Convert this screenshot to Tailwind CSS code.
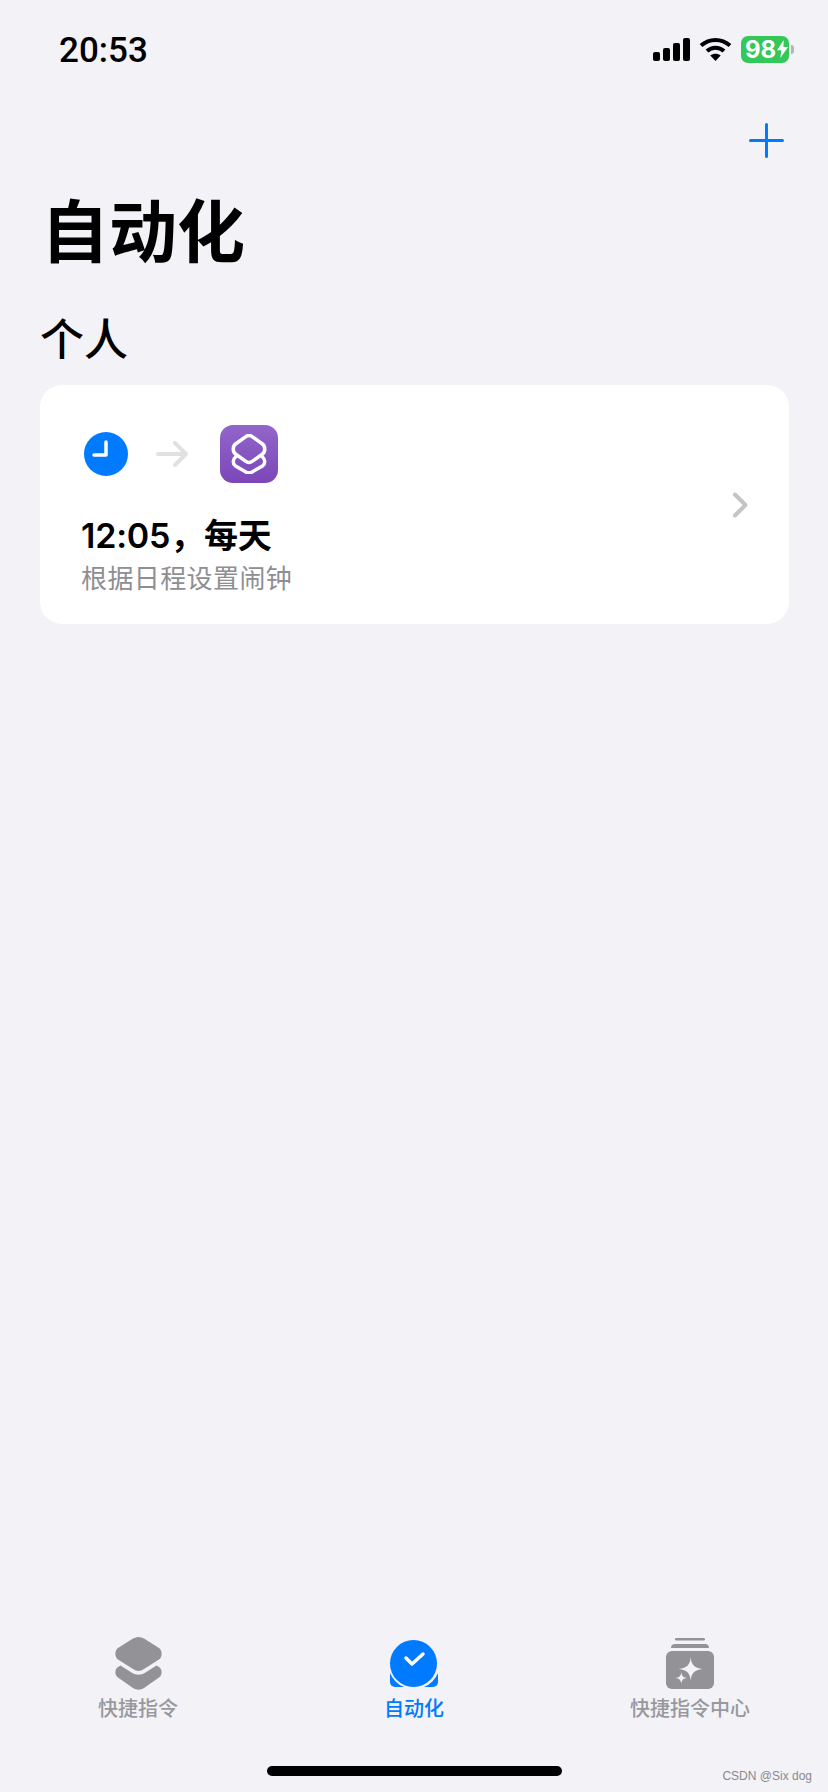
<!DOCTYPE html>
<html lang="zh-CN">
<head>
  <meta charset="UTF-8"/>
  <title>自动化</title>
  <script src="https://cdn.jsdelivr.net/npm/@tailwindcss/browser@4"></script>
</head>
<body class="bg-[#f2f2f7] font-['Inter','Noto_Sans_CJK_SC',sans-serif] text-black">
  <div class="relative w-[828px] h-[1792px] flex flex-col overflow-hidden">

    <!-- status bar -->
    <div class="h-[100px] pl-[59px] pr-[34px] pt-[29px] flex justify-between items-start">
      <span class="font-['Roboto',sans-serif] text-[35px] leading-[44px] font-medium">20:53</span>
      <div class="flex items-center gap-[9px] h-[44px] -mt-[2px]">
        <svg width="37" height="23" viewBox="0 0 37 23" fill="#000">
          <rect x="0" y="14" width="7" height="9" rx="2"/>
          <rect x="10" y="10" width="7" height="13" rx="2"/>
          <rect x="20" y="5" width="7" height="18" rx="2"/>
          <rect x="30" y="0" width="7" height="23" rx="2"/>
        </svg>
        <svg width="33" height="24" viewBox="0 0 33 24" fill="none" stroke="#000" stroke-width="4">
          <path d="M2 8.500C10.500 1 22.500 1 31 8.500"/>
          <path d="M8 14C13 9.500 20 9.500 25 14"/>
          <path d="M16.500 24L11.300 18.600C14.300 16 18.700 16 21.700 18.600Z" fill="#000" stroke="none"/>
        </svg>
        <div class="flex items-center gap-[2px]">
          <div class="w-[48px] h-[27px] rounded-[7px] bg-[#34c759] text-white text-[24px] leading-[27px] font-bold flex items-center pl-[4px] gap-[1px]">
            <span>98</span>
            <svg width="11" height="20" viewBox="0 0 13 21" fill="#fff"><path d="M8 0L0 12H5L4 21L13 8H7.500Z"/></svg>
          </div>
          <div class="w-[3px] h-[9px] rounded-r-full bg-[#b5b5b8]"></div>
        </div>
      </div>
    </div>

    <!-- add button -->
    <div class="h-[60px] pr-[44px] flex justify-end items-start pt-[23px]">
      <svg width="35" height="35" viewBox="0 0 35 35" stroke="#007aff" stroke-width="3" stroke-linecap="round">
        <path d="M17.500 1.500V33.500M1.500 17.500H33.500"/>
      </svg>
    </div>

    <h1 class="pl-[41px] mt-[32px] text-[68px] leading-[80px] font-bold">自动化</h1>
    <h2 class="pl-[40px] mt-[40px] text-[44px] leading-[56px] font-medium">个人</h2>

    <!-- automation card -->
    <div class="mt-[17px] ml-[40px] w-[749px] h-[239px] rounded-[22px] bg-white pl-[41px] pr-[41px] flex items-center justify-between">
      <div class="self-start pt-[40px]">
        <div class="flex items-center h-[58px]">
          <div class="w-[44px] h-[44px] ml-[3px] rounded-full bg-[#007aff]">
            <svg width="44" height="44" viewBox="0 0 44 44" fill="none" stroke="#fff" stroke-width="3.500" stroke-linecap="round" stroke-linejoin="round">
              <path d="M22 10V23H10"/>
            </svg>
          </div>
          <svg class="ml-[28px]" width="33" height="26" viewBox="0 0 33 26" fill="none" stroke="#e1e1e3" stroke-width="4" stroke-linecap="round" stroke-linejoin="round">
            <path d="M2 13H30M19 2L30 13L19 24"/>
          </svg>
          <div class="ml-[31px] w-[58px] h-[58px] rounded-[13px] bg-gradient-to-b from-[#9266c9] to-[#7c46b9] flex items-center justify-center">
            <svg width="36" height="40" viewBox="0 0 36 40" fill="none" stroke="#fff" stroke-width="3.500" stroke-linejoin="round" stroke-linecap="round">
              <path d="M14.500 2.800C16.700 1.200 19.300 1.200 21.500 2.800L31.500 10C34.500 12.300 34.500 17.700 31.500 20L21.500 27.200C19.300 28.800 16.700 28.800 14.500 27.200L4.500 20C1.500 17.700 1.500 12.300 4.500 10Z"/>
              <path d="M6 21.500L4.500 23C1.500 25.500 1.500 29.500 4.500 32L14.500 37.700C16.700 39.200 19.300 39.200 21.500 37.700L31.500 32C34.500 29.500 34.500 25.500 31.500 23L30 21.500"/>
            </svg>
          </div>
        </div>
        <div class="mt-[32px] text-[34px] leading-[42px] font-semibold tracking-[-0.2px]">12:05，每天</div>
        <div class="mt-[5px] text-[26px] leading-[34px] text-[#8e8e93] tracking-[0.4px]">根据日程设置闹钟</div>
      </div>
      <svg width="16" height="26" viewBox="0 0 16 26" fill="none" stroke="#c4c4c7" stroke-width="4" stroke-linecap="round" stroke-linejoin="round">
        <path d="M3 2.500L13.500 13L3 23.500"/>
      </svg>
    </div>

    <!-- tab bar -->
    <div class="mt-auto mb-[70px] grid grid-cols-3">
      <div class="flex flex-col items-center">
        <div class="h-[54px] flex items-center">
          <svg width="47" height="53" viewBox="0 0 47 53" fill="#939397">
            <path d="M18 1.500C21.500 -0.500 25.500 -0.500 29 1.500L44 11C47.500 13.500 47.500 20 44 22.500L29 32C25.500 34.500 21.500 34.500 18 32L3 22.500C-0.500 20 -0.500 13.500 3 11Z"/>
            <path d="M5.500 28.500L16.500 35.500C21 38.500 26 38.500 30.500 35.500L41.500 28.500L44 30C47.500 32.500 47.500 38 44 40.500L29 51C25.500 53.300 21.500 53.300 18 51L3 40.500C-0.500 38 -0.500 32.500 3 30Z"/>
          </svg>
        </div>
        <span class="mt-[6px] whitespace-nowrap text-[20px] leading-[26px] font-medium text-[#98989d]">快捷指令</span>
      </div>
      <div class="flex flex-col items-center">
        <div class="h-[54px] flex items-center">
          <div class="relative w-[48px] h-[47px]">
            <div class="absolute inset-x-0 bottom-0 h-[16px] rounded-b-[5px] bg-[#007aff]"></div>
            <div class="absolute left-[-2px] top-[-2.500px] w-[52px] h-[52px] rounded-full bg-[#f2f2f7]"></div>
            <div class="absolute left-0 top-0 w-[47px] h-[47px] rounded-full bg-[#007aff]">
              <svg width="47" height="47" viewBox="0 0 47 47" fill="none" stroke="#fff" stroke-width="3.500" stroke-linecap="round" stroke-linejoin="round"><path d="M16 18L22 24L33 14"/></svg>
            </div>
          </div>
        </div>
        <span class="mt-[6px] whitespace-nowrap text-[20px] leading-[26px] font-medium text-[#007aff]">自动化</span>
      </div>
      <div class="flex flex-col items-center">
        <div class="h-[54px] flex items-center">
          <svg width="48" height="51" viewBox="0 0 48 51" fill="#939397">
            <rect x="9" y="0" width="30" height="2.500" rx="1.250"/>
            <path d="M5 10C5 7.500 6.500 6 9 6H39C41.500 6 43 7.500 43 10H5Z"/>
            <rect x="0" y="13" width="48" height="38" rx="6"/>
            <path d="M24.700 19C25.300 26.500 28 30 36.700 31C28 32 25.300 35.500 24.700 43C24.100 35.500 21.400 32 12.700 31C21.400 30 24.100 26.500 24.700 19Z" fill="#f2f2f7"/>
            <path d="M15.300 34C15.700 38 17 39.500 21.300 40C17 40.500 15.700 42 15.300 46C14.900 42 13.500 40.500 9.300 40C13.500 39.500 14.900 38 15.300 34Z" fill="#f2f2f7"/>
          </svg>
        </div>
        <span class="mt-[6px] whitespace-nowrap text-[20px] leading-[26px] font-medium text-[#98989d]">快捷指令中心</span>
      </div>
    </div>

    <!-- home indicator -->
    <div class="absolute left-[267px] bottom-[16px] w-[295px] h-[10px] rounded-full bg-black"></div>
    <!-- watermark -->
    <span class="absolute right-[16px] bottom-[8px] text-[12px] leading-[16px] text-[#8a8a8e] font-['Liberation_Sans',sans-serif]">CSDN @Six dog</span>
  </div>
</body>
</html>
